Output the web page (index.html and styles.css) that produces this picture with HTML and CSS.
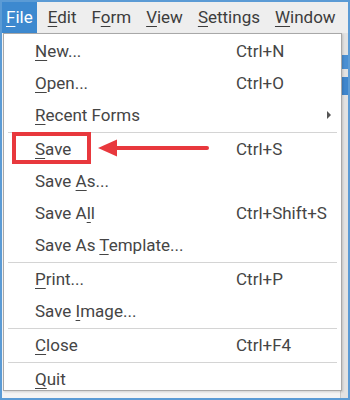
FILE: index.html
```html
<!DOCTYPE html>
<html lang="en">
<head>
  <meta charset="UTF-8">
  <title>File menu</title>
  <link rel="stylesheet" href="styles.css">
</head>
<body>
  <div class="frame">
    <div class="menubar">
      <span class="menubar-item active"><u>F</u>ile</span>
      <span class="menubar-item"><u>E</u>dit</span>
      <span class="menubar-item">F<u>o</u>rm</span>
      <span class="menubar-item"><u>V</u>iew</span>
      <span class="menubar-item"><u>S</u>ettings</span>
      <span class="menubar-item"><u>W</u>indow</span>
    </div>

    <div class="workspace">
      <div class="scroll-strip">
        <span class="scroll-knob"></span>
        <span class="scroll-bar"></span>
      </div>
    </div>

    <div class="menu">
      <div class="item"><span><u>N</u>ew...</span><span>Ctrl+N</span></div>
      <div class="item"><span><u>O</u>pen...</span><span>Ctrl+O</span></div>
      <div class="item"><span><u>R</u>ecent Forms</span><span></span><span class="submenu"></span></div>
      <div class="sep"></div>
      <div class="item"><span><u>S</u>ave</span><span>Ctrl+S</span></div>
      <div class="item"><span>Save <u>A</u>s...</span><span></span></div>
      <div class="item"><span>Save A<u>l</u>l</span><span>Ctrl+Shift+S</span></div>
      <div class="item"><span>Save As <u>T</u>emplate...</span><span></span></div>
      <div class="sep"></div>
      <div class="item"><span><u>P</u>rint...</span><span>Ctrl+P</span></div>
      <div class="item"><span>Save <u>I</u>mage...</span><span></span></div>
      <div class="sep"></div>
      <div class="item"><span><u>C</u>lose</span><span>Ctrl+F4</span></div>
      <div class="sep"></div>
      <div class="item"><span><u>Q</u>uit</span><span></span></div>
    </div>

    <!-- annotation -->
    <div class="callout"></div>
    <svg class="callout-arrow" width="116" height="22" viewBox="0 0 116 22">
      <line x1="18" y1="11" x2="110" y2="11" stroke="#e8383d" stroke-width="4" stroke-linecap="round" />
      <polygon points="1,11 20,2.5 20,19.5" fill="#e8383d" />
    </svg>
  </div>
</body>
</html>
```

FILE: styles.css
```css
body {
  margin: 0;
  font-family: Roboto, "Liberation Sans", sans-serif;
  color: #454545;
}

.frame {
  position: relative;
  box-sizing: border-box;
  width: 350px;
  height: 400px;
  border: 2px solid #5b9bd5;
  background: #ececec;
  display: flex;
  flex-direction: column;
}

u {
  text-decoration-thickness: 1px;
  text-underline-offset: 3px;
}

.menubar {
  display: flex;
  height: 31px;
  background: #eeeeee;
  font-size: 17px;
}

.menubar-item {
  padding: 0 4px;
  margin-right: 7px;
  line-height: 31px;
  color: #3c3c3c;
}

.menubar-item.active {
  background: #3d89cf;
  color: #fff;
}

.workspace {
  flex: 1;
  display: flex;
  justify-content: flex-end;
  background: #f4f4f4;
}

.scroll-strip {
  width: 7px;
  display: flex;
  flex-direction: column;
  background: #e2e2e2;
  border-left: 1px solid #c8c8c8;
}

.scroll-knob {
  height: 14px;
  margin-top: 22px;
  background: #4a8fd2;
}

.scroll-bar {
  height: 18px;
  margin-top: 8px;
  background: #3f86cc;
}

.menu {
  position: absolute;
  left: 1px;
  top: 31px;
  box-sizing: border-box;
  width: 339px;
  height: 358px;
  padding-top: 1px;
  background: #fff;
  border: 1px solid #a8a8a8;
  box-shadow: 1px 1px 2px rgba(0, 0, 0, 0.15);
  font-size: 17px;
}

.item {
  display: grid;
  grid-template-columns: 201px 1fr 14px;
  align-items: center;
  height: 32px;
  padding-left: 31px;
  color: #454545;
}

.sep {
  height: 1px;
  margin: 0.5px 4px 0.5px 4px;
  background: #d4d4d4;
}

.submenu {
  width: 0;
  height: 0;
  border-top: 4px solid transparent;
  border-bottom: 4px solid transparent;
  border-left: 4px solid #555;
}

.callout {
  position: absolute;
  left: 10px;
  top: 130px;
  width: 79px;
  height: 32px;
  box-sizing: border-box;
  border: 4px solid #e8383d;
}

.callout-arrow {
  position: absolute;
  left: 95px;
  top: 135px;
}
```
